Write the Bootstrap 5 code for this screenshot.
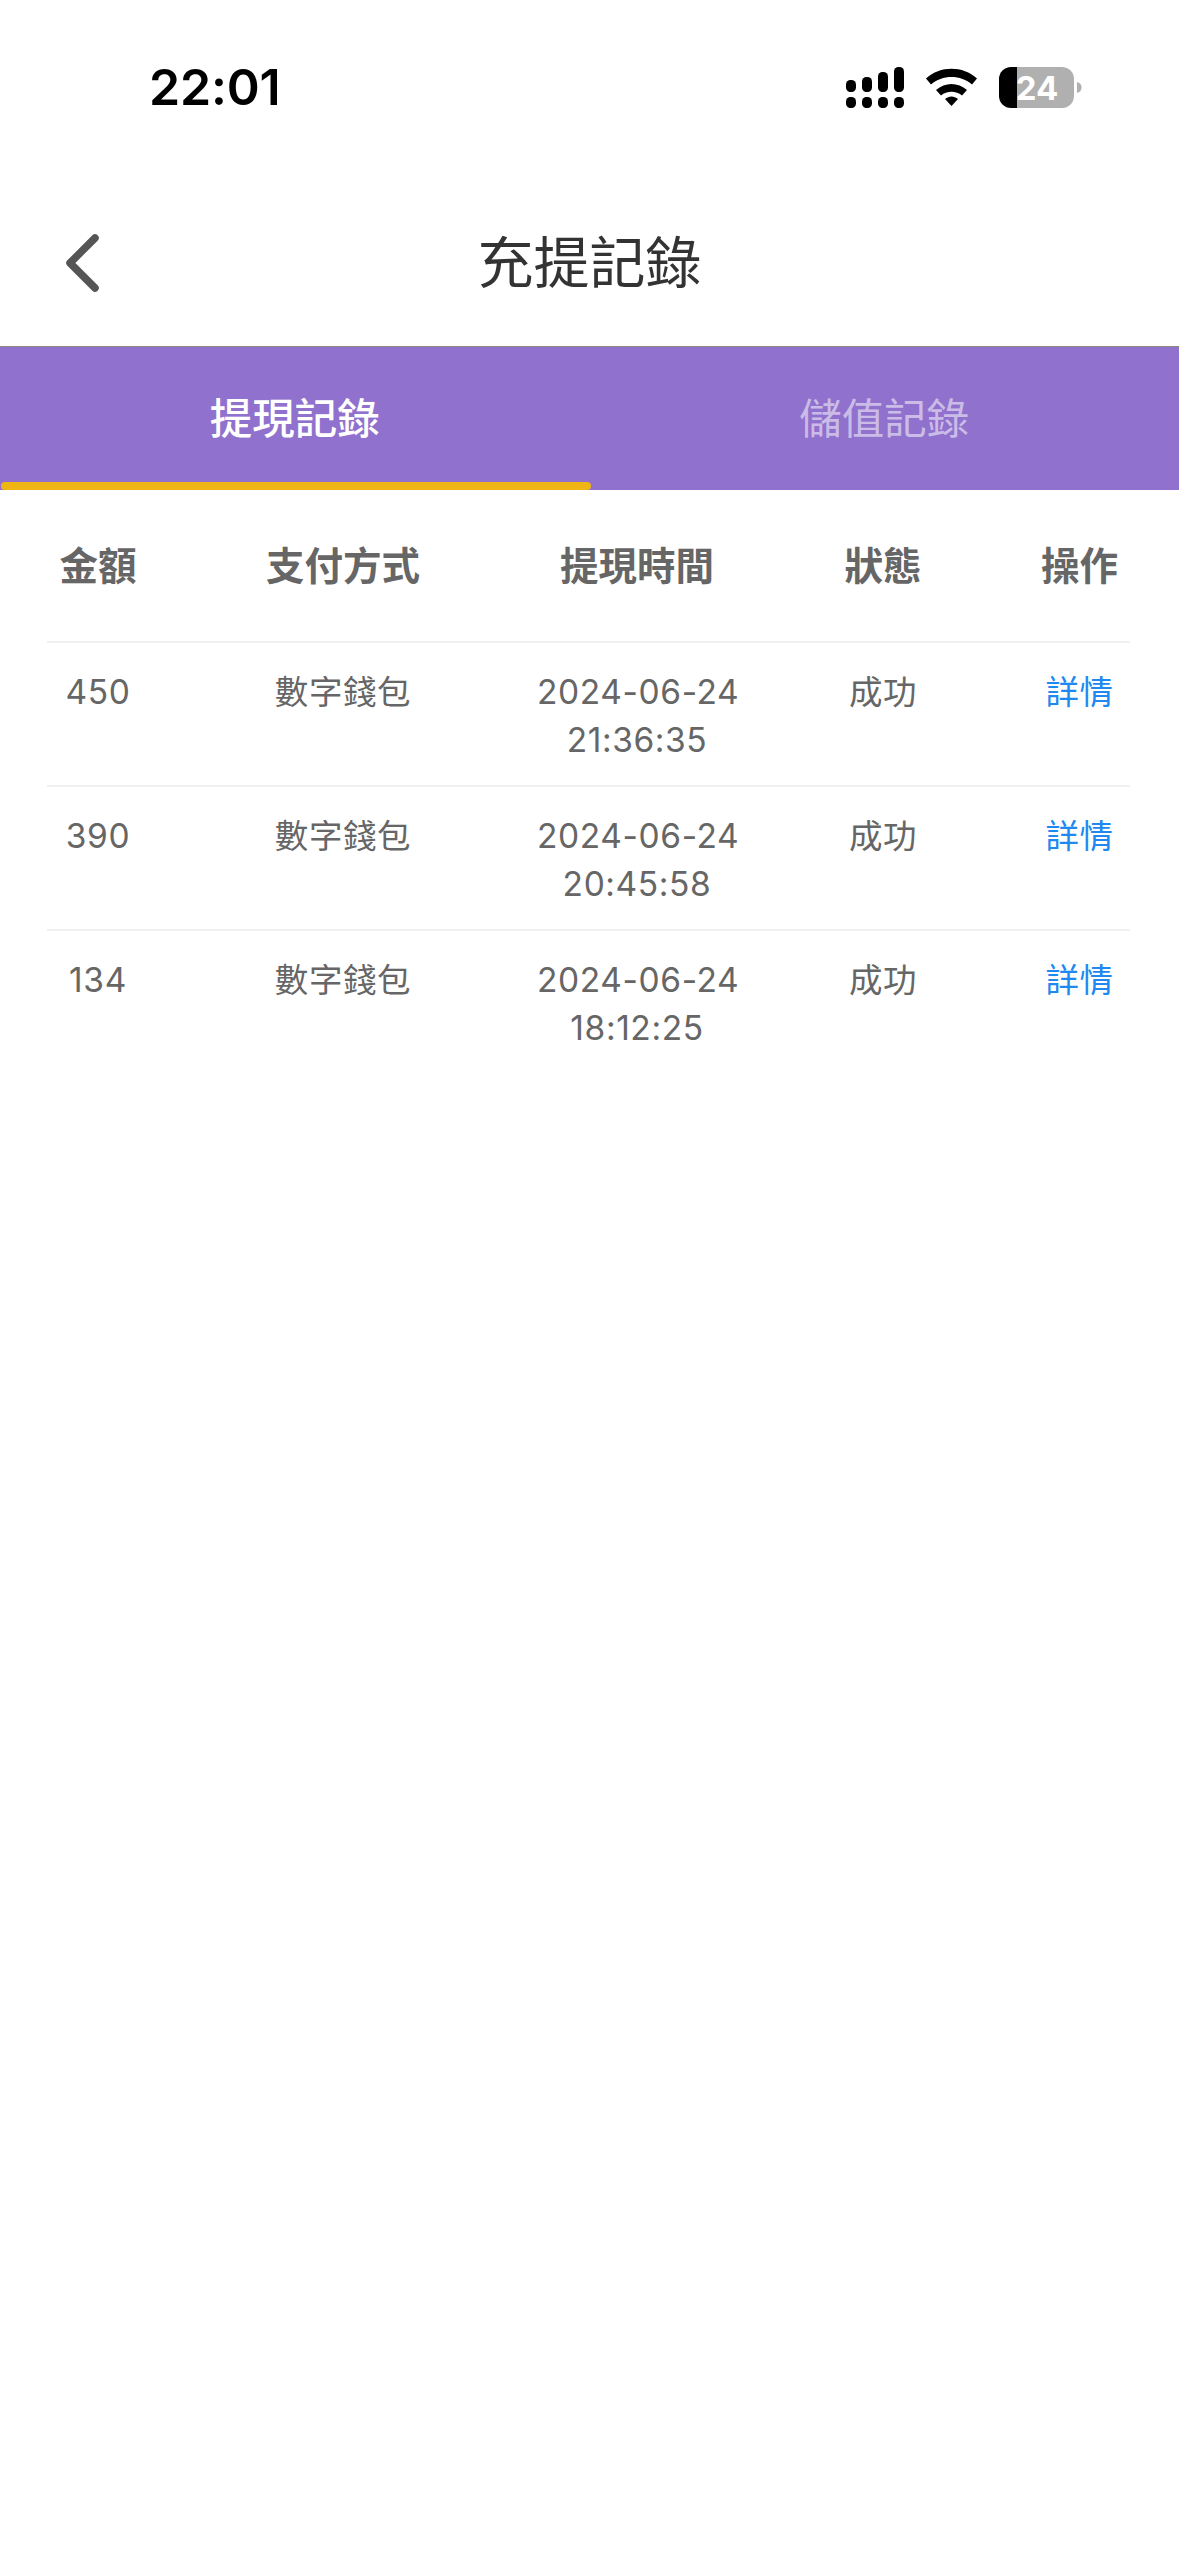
<!DOCTYPE html>
<html lang="zh-Hant">
<head>
<meta charset="utf-8">
<title>充提記錄</title>
<link href="https://cdn.jsdelivr.net/npm/bootstrap@5.3.0/dist/css/bootstrap.min.css" rel="stylesheet">
<style>
html,body{background:#fff;margin:0}
body{width:1179px;height:2556px;overflow:hidden;font-family:Inter,"Noto Sans CJK TC",sans-serif;color:#666}
.sbar{height:176px;padding:60px 0 0 149px;align-items:flex-start}
.sclock{font:600 50px/55px Inter,sans-serif;color:#000;width:697px;letter-spacing:-.2px}
.sicons{display:block;width:240px;height:50px;margin-top:6px}
.hdr{height:171px;border-bottom:1px solid #8a8a80;padding-top:4px}
.hside{width:164px;padding-left:64px}
.htitle{font-size:56px;font-weight:400;line-height:70px;color:#333;margin:0}
.tabbar{background:#9071cd;height:143px}
.tabbtn{flex:0 0 50%;width:50%;height:135px;text-align:center;font-size:42.500px;line-height:56px;border:0;background:none;padding:8px 0 0;color:rgba(255,255,255,.55);font-weight:400}
.tabbtn.on{color:#fff;font-weight:500;position:relative}
.tabbtn.on::after{content:"";position:absolute;left:1px;right:-1px;bottom:-8px;height:8px;background:#eeb514;border-radius:4px}
.rectbl{width:1083px;margin:0 0 0 47px;table-layout:fixed;border-collapse:collapse}
.rectbl th{height:152px;font-size:38.500px;font-weight:700;color:#666;text-align:center;padding:3px 0 0;border-bottom:2px solid #f0f0f0}
.rectbl td{height:144px;font-size:33.500px;line-height:48px;color:#666;text-align:center;vertical-align:top;padding:25px 0 0;border-bottom:2px solid #f0f0f0;letter-spacing:.6px}
.rectbl tr:last-child td{border-bottom:0}
.c1{width:102px}.c2{width:388px}.c3{width:200px}.c4{width:292px}.c5{width:101px}
.rectbl td a{color:#2089ef;text-decoration:none}
.nowr{white-space:nowrap}
</style>
</head>
<body>
<div class="sbar d-flex">
  <div class="sclock">22:01</div>
  <svg class="sicons" viewBox="846 66 240 50" aria-hidden="true">
    <g fill="#000">
      <rect x="846" y="97" width="10" height="11" rx="4.500"/><rect x="862" y="97" width="10" height="11" rx="4.500"/><rect x="878" y="97" width="10" height="11" rx="4.500"/><rect x="894" y="97" width="10" height="11" rx="4.500"/>
      <rect x="846" y="80" width="10" height="12" rx="4.500"/><rect x="862" y="77" width="10" height="15" rx="4.500"/><rect x="878" y="72" width="10" height="20" rx="4.500"/><rect x="894" y="67" width="10" height="25" rx="4.500"/>
      <path d="M926 78.500C940 65.500 963 65.500 977 78.500L972 84.500C961 74.500 942 74.500 931 84.500Z"/>
      <path d="M936 90C945 82 958 82 967 90L962 95.500C956 90.500 947 90.500 941 95.500Z"/>
      <path d="M945 99C949 95.500 954 95.500 958 99L951.500 106Z"/>
    </g>
    <path d="M1017 67H1062A12 12 0 0 1 1074 79V96A12 12 0 0 1 1062 108H1017Z" fill="#b0b0b0"/>
    <path d="M1017 67H1011A12 12 0 0 0 999 79V96A12 12 0 0 0 1011 108H1017Z" fill="#000"/>
    <path d="M1077 82C1080.500 83 1081.500 85 1081.500 87.500C1081.500 90 1080.500 92 1077 93Z" fill="#b0b0b0"/>
    <text x="1037" y="100" text-anchor="middle" font-family="Inter,sans-serif" font-weight="700" font-size="33" fill="#fff">24</text>
  </svg>
</div>
<header class="hdr d-flex align-items-center">
  <div class="hside">
    <svg width="38" height="60" viewBox="0 0 38 60" class="d-block" aria-hidden="true"><path d="M31 5 6 30 31 55" fill="none" stroke="#555" stroke-width="7.500" stroke-linecap="round" stroke-linejoin="round"/></svg>
  </div>
  <h1 class="htitle flex-grow-1 text-center">充提記錄</h1>
  <div class="hside"></div>
</header>
<nav class="tabbar d-flex">
  <button type="button" class="tabbtn on">提現記錄</button>
  <button type="button" class="tabbtn">儲值記錄</button>
</nav>
<table class="rectbl">
  <colgroup><col class="c1"><col class="c2"><col class="c3"><col class="c4"><col class="c5"></colgroup>
  <thead><tr><th>金額</th><th>支付方式</th><th class="nowr">提現時間</th><th>狀態</th><th>操作</th></tr></thead>
  <tbody>
    <tr><td>450</td><td>數字錢包</td><td class="nowr">2024-06-24<br>21:36:35</td><td>成功</td><td><a href="#">詳情</a></td></tr>
    <tr><td>390</td><td>數字錢包</td><td class="nowr">2024-06-24<br>20:45:58</td><td>成功</td><td><a href="#">詳情</a></td></tr>
    <tr><td>134</td><td>數字錢包</td><td class="nowr">2024-06-24<br>18:12:25</td><td>成功</td><td><a href="#">詳情</a></td></tr>
  </tbody>
</table>
<script src="https://cdn.jsdelivr.net/npm/bootstrap@5.3.0/dist/js/bootstrap.bundle.min.js"></script>
</body>
</html>
